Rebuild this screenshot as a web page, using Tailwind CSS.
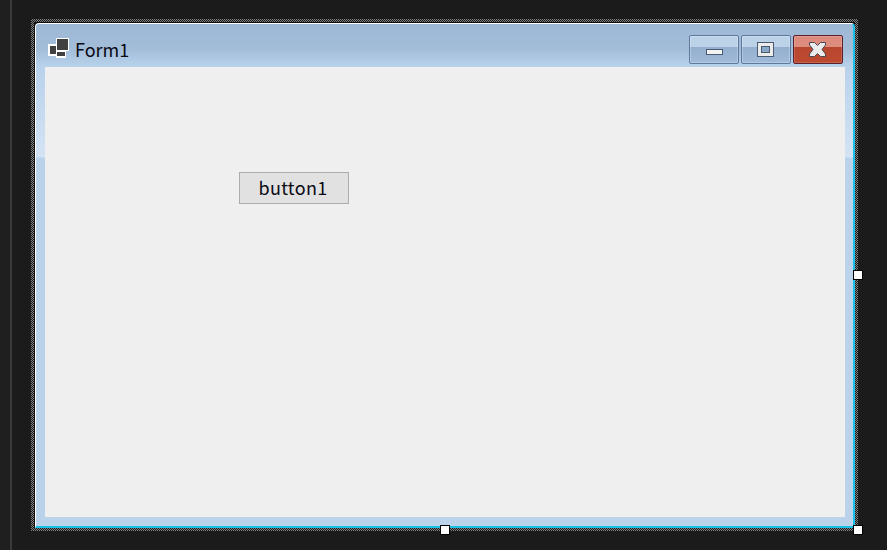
<!DOCTYPE html>
<html lang="en">
<head>
    <meta charset="UTF-8">
    <title>Form1</title>
    <script src="https://cdn.jsdelivr.net/npm/@tailwindcss/browser@4"></script>
</head>
<body class="bg-[#1b1b1b] overflow-hidden">
    <div class="relative flex h-[550px] w-[887px] font-['Noto_Sans_CJK_SC','Noto_Sans',sans-serif]">
        <!-- editor gutter -->
        <div class="h-full w-[10px] bg-[#1f1f1f]"></div>
        <div class="h-full w-[2px] bg-[#3a3a3a]"></div>

        <!-- selection frame -->
        <div class="ml-[19px] mt-[19px] h-[512px] w-[827px] bg-[repeating-conic-gradient(#808080_0_25%,#1b1b1b_0_50%)] bg-[length:2px_2px] pl-[3px] pr-[3px] pt-[3px] pb-[3px]">
            <div class="h-full w-full bg-[#111] pl-px pt-px">
                <!-- form -->
                <div class="flex h-[505px] w-[820px] flex-col rounded-t-[4px] border-t border-l border-t-white border-l-white border-b-2 border-r-2 border-b-[#19c0e8] border-r-[#19c0e8] bg-[linear-gradient(to_bottom,#9db8d5_0px,#a3bdd9_25px,#b9d2ec_43px,#d3e3f4_133px,#bad3ea_134px,#bad3ea_100%)]">
                    <!-- title bar -->
                    <div class="flex h-[43px] shrink-0 items-start pl-[12px] pr-[10px]">
                        <svg class="mt-[14px] h-[20px] w-[21px] shrink-0" viewBox="0 0 21 20">
                            <rect x="8" y="0" width="13" height="13" fill="#fff"/>
                            <rect x="8" y="13" width="10" height="7" fill="#fff"/>
                            <rect x="9" y="1" width="11" height="11" fill="#404040"/>
                            <rect x="9" y="14" width="8" height="4" fill="#404040"/>
                            <rect x="0" y="6" width="8" height="12" fill="#fff"/>
                            <rect x="2" y="8" width="6" height="8" fill="#404040"/>
                        </svg>
                        <span class="ml-[6px] mt-[12px] text-[18px] leading-[26px] text-[#0a0a14]">Form1</span>
                        <div class="ml-auto mt-[11px] flex gap-[2px]">
                            <div class="flex h-[29px] w-[50px] items-center justify-center rounded-[2px] border border-[#5d7a9c] bg-[linear-gradient(to_bottom,#bcd2e9_0,#bcd2e9_11px,#94afce_11px,#a0bad8_100%)] shadow-[inset_0_0_0_1px_rgba(255,255,255,0.25)]">
                                <svg class="mt-[4px] h-[6px] w-[17px]" viewBox="0 0 17 6"><rect x=".5" y=".5" width="16" height="5" fill="#f4f4f4" stroke="#4a5a70"/></svg>
                            </div>
                            <div class="flex h-[29px] w-[50px] items-center justify-center rounded-[2px] border border-[#5d7a9c] bg-[linear-gradient(to_bottom,#bcd2e9_0,#bcd2e9_11px,#94afce_11px,#a0bad8_100%)] shadow-[inset_0_0_0_1px_rgba(255,255,255,0.25)]">
                                <svg class="-ml-[2px] h-[15px] w-[17px]" viewBox="0 0 17 15"><rect x=".5" y=".5" width="16" height="14" fill="#ececec" stroke="#4a5a70"/><rect x="4.500" y="4.500" width="8" height="6" fill="#8aa8c8" stroke="#4a5a70"/></svg>
                            </div>
                            <div class="flex h-[29px] w-[50px] items-center justify-center rounded-[2px] border border-[#5a2030] bg-[linear-gradient(to_bottom,#dd8a7c_0,#dd8d7e_11px,#b8462e_11px,#bd4a30_100%)] shadow-[inset_0_0_0_1px_rgba(255,255,255,0.15)]">
                                <svg class="-ml-[2px] h-[15px] w-[17px]" viewBox="0 0 17 15"><path d="M.5.5h5L8.500 3.500 11.500.5h5v2.500L13 7.500l3.500 4.500v2.500h-5L8.500 11.500 5.500 14.500h-5V12L4 7.500.5 3z" fill="#ececec" stroke="#4a4a55" stroke-width="1"/></svg>
                            </div>
                        </div>
                    </div>
                    <!-- client area -->
                    <div class="ml-[9px] mr-[8px] h-[450px] bg-[#efefef] pl-[194px] pt-[105px]">
                        <div class="flex h-[32px] w-[110px] items-center justify-center border border-[#adadad] bg-[#e1e1e1] pb-[2px] pr-[2px] text-[18px] tracking-[0.3px] text-[#0a0a14]">button1</div>
                    </div>
                </div>
            </div>
        </div>

        <!-- resize handles -->
        <div class="absolute left-[853px] top-[270px] size-[10px] border border-black bg-white"></div>
        <div class="absolute left-[440px] top-[525px] size-[10px] border border-black bg-white"></div>
        <div class="absolute left-[853px] top-[525px] size-[10px] border border-black bg-white"></div>
    </div>
</body>
</html>
